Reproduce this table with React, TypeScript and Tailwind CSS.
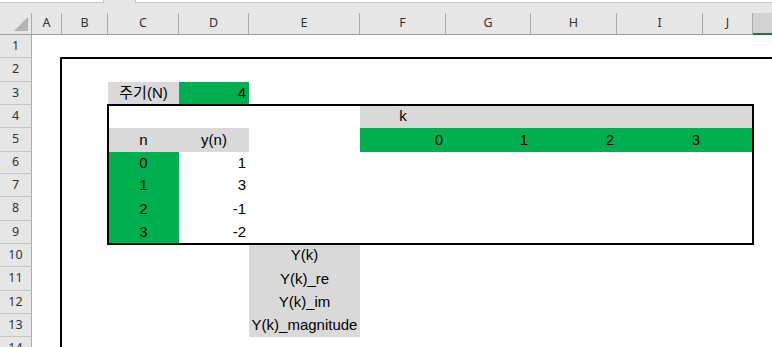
const COLS = [
  { key: "A", w: 30 },
  { key: "B", w: 46 },
  { key: "C", w: 71 },
  { key: "D", w: 70 },
  { key: "E", w: 111 },
  { key: "F", w: 86 },
  { key: "G", w: 85 },
  { key: "H", w: 86 },
  { key: "I", w: 86 },
  { key: "J", w: 50 },
];

const ROWS = [1, 2, 3, 4, 5, 6, 7, 8, 9, 10, 11, 12, 13, 14];

const SAMPLES = [
  { n: 0, y: 1 },
  { n: 1, y: 3 },
  { n: 2, y: -1 },
  { n: 3, y: -2 },
];

const OUTPUTS = ["Y(k)", "Y(k)_re", "Y(k)_im", "Y(k)_magnitude"];

const cellFont = "font-['Liberation_Sans','Noto_Sans_CJK_KR',sans-serif] text-[15px] text-black";
const headFont = "font-['Noto_Sans','Liberation_Sans',sans-serif] text-[12.5px] text-[#333]";

// grid line indexes: 1 = row header, 2 = A ... 11 = J, 12 = K
const rowStart = [
  "",
  "row-start-1",
  "row-start-2",
  "row-start-3",
  "row-start-4",
  "row-start-5",
  "row-start-6",
  "row-start-7",
  "row-start-8",
  "row-start-9",
  "row-start-10",
  "row-start-11",
  "row-start-12",
  "row-start-13",
  "row-start-14",
];

export default function App() {
  return (
    <div className="h-[347px] w-[772px] overflow-hidden bg-white">
      {/* formula bar edge */}
      <div className="flex h-[3px] bg-[#e6e6e6]">
        <div className="w-[104px] border-b border-r border-[#c6c6c6] bg-white" />
        <div className="w-[31px]" />
        <div className="flex-1 border-b border-l border-[#c6c6c6] bg-white" />
      </div>

      {/* column headers */}
      <div className="flex h-[32px] border-b border-[#9e9e9e] bg-[#e6e6e6] pt-[10px]">
        <div className="relative w-[32px] border-r border-[#ababab]">
          <svg className="absolute left-[14px] top-[4px]" width="14" height="14" viewBox="0 0 14 14">
            <path d="M14 0 L14 14 L0 14 Z" fill="#b4b4b4" />
          </svg>
        </div>
        {COLS.map((c) => (
          <div
            key={c.key}
            style={{ width: c.w }}
            className={`flex items-center justify-center border-r border-[#ababab] ${headFont}`}
          >
            {c.key}
          </div>
        ))}
        <div className="-mb-[1px] flex-1 border-b-2 border-[#217346] bg-[#d2d2d2]" />
      </div>

      {/* sheet body */}
      <div className={`grid grid-cols-[32px_30px_46px_71px_70px_111px_86px_85px_86px_86px_50px_1fr] grid-rows-[23px_24px_23px_23px_24px_22px_23px_24px_23px_23px_24px_23px_23px_24px] ${cellFont}`}>
        {ROWS.map((r) => (
          <div
            key={r}
            className={`col-start-1 ${rowStart[r]} flex items-center justify-center border-b border-r border-[#c6c6c6] border-r-[#ababab] bg-[#e6e6e6] ${headFont}`}
          >
            {r}
          </div>
        ))}

        {/* period */}
        <div className="col-start-4 row-start-3 flex items-center justify-center bg-[#d9d9d9]">주기(N)</div>
        <div className="col-start-5 row-start-3 flex items-center justify-end bg-[#00b050] pr-[3px]">4</div>

        {/* k header */}
        <div className="col-start-7 col-end-12 row-start-4 flex items-center bg-[#d9d9d9]">
          <div className="w-[86px] text-center">k</div>
        </div>
        {[0, 1, 2, 3].map((k, i) => (
          <div
            key={k}
            className={`${["col-start-7", "col-start-8", "col-start-9", "col-start-10"][i]} row-start-5 flex items-center justify-end bg-[#00b050] pr-[3px]`}
          >
            {k}
          </div>
        ))}
        <div className="col-start-11 row-start-5 bg-[#00b050]" />

        {/* samples */}
        <div className="col-start-4 row-start-5 flex items-center justify-center bg-[#d9d9d9]">n</div>
        <div className="col-start-5 row-start-5 flex items-center justify-center bg-[#d9d9d9]">y(n)</div>
        {SAMPLES.map((s, i) => (
          <div key={s.n} className="contents">
            <div className={`col-start-4 ${rowStart[6 + i]} flex items-center justify-center bg-[#00b050]`}>{s.n}</div>
            <div className={`col-start-5 ${rowStart[6 + i]} flex items-center justify-end pr-[3px]`}>{s.y}</div>
          </div>
        ))}

        {/* output labels */}
        {OUTPUTS.map((o, i) => (
          <div key={o} className={`col-start-6 ${rowStart[10 + i]} flex items-center justify-center bg-[#d9d9d9]`}>
            {o}
          </div>
        ))}

        {/* thick range borders */}
        <div className="pointer-events-none col-start-3 col-end-13 row-start-2 row-end-15 -ml-[2px] -mt-[1px] border-l-2 border-t-2 border-black" />
        <div className="pointer-events-none col-start-4 col-end-12 row-start-4 row-end-10 -mb-[1px] -ml-[1px] -mr-[1px] -mt-[1px] border-2 border-black" />
      </div>
    </div>
  );
}
